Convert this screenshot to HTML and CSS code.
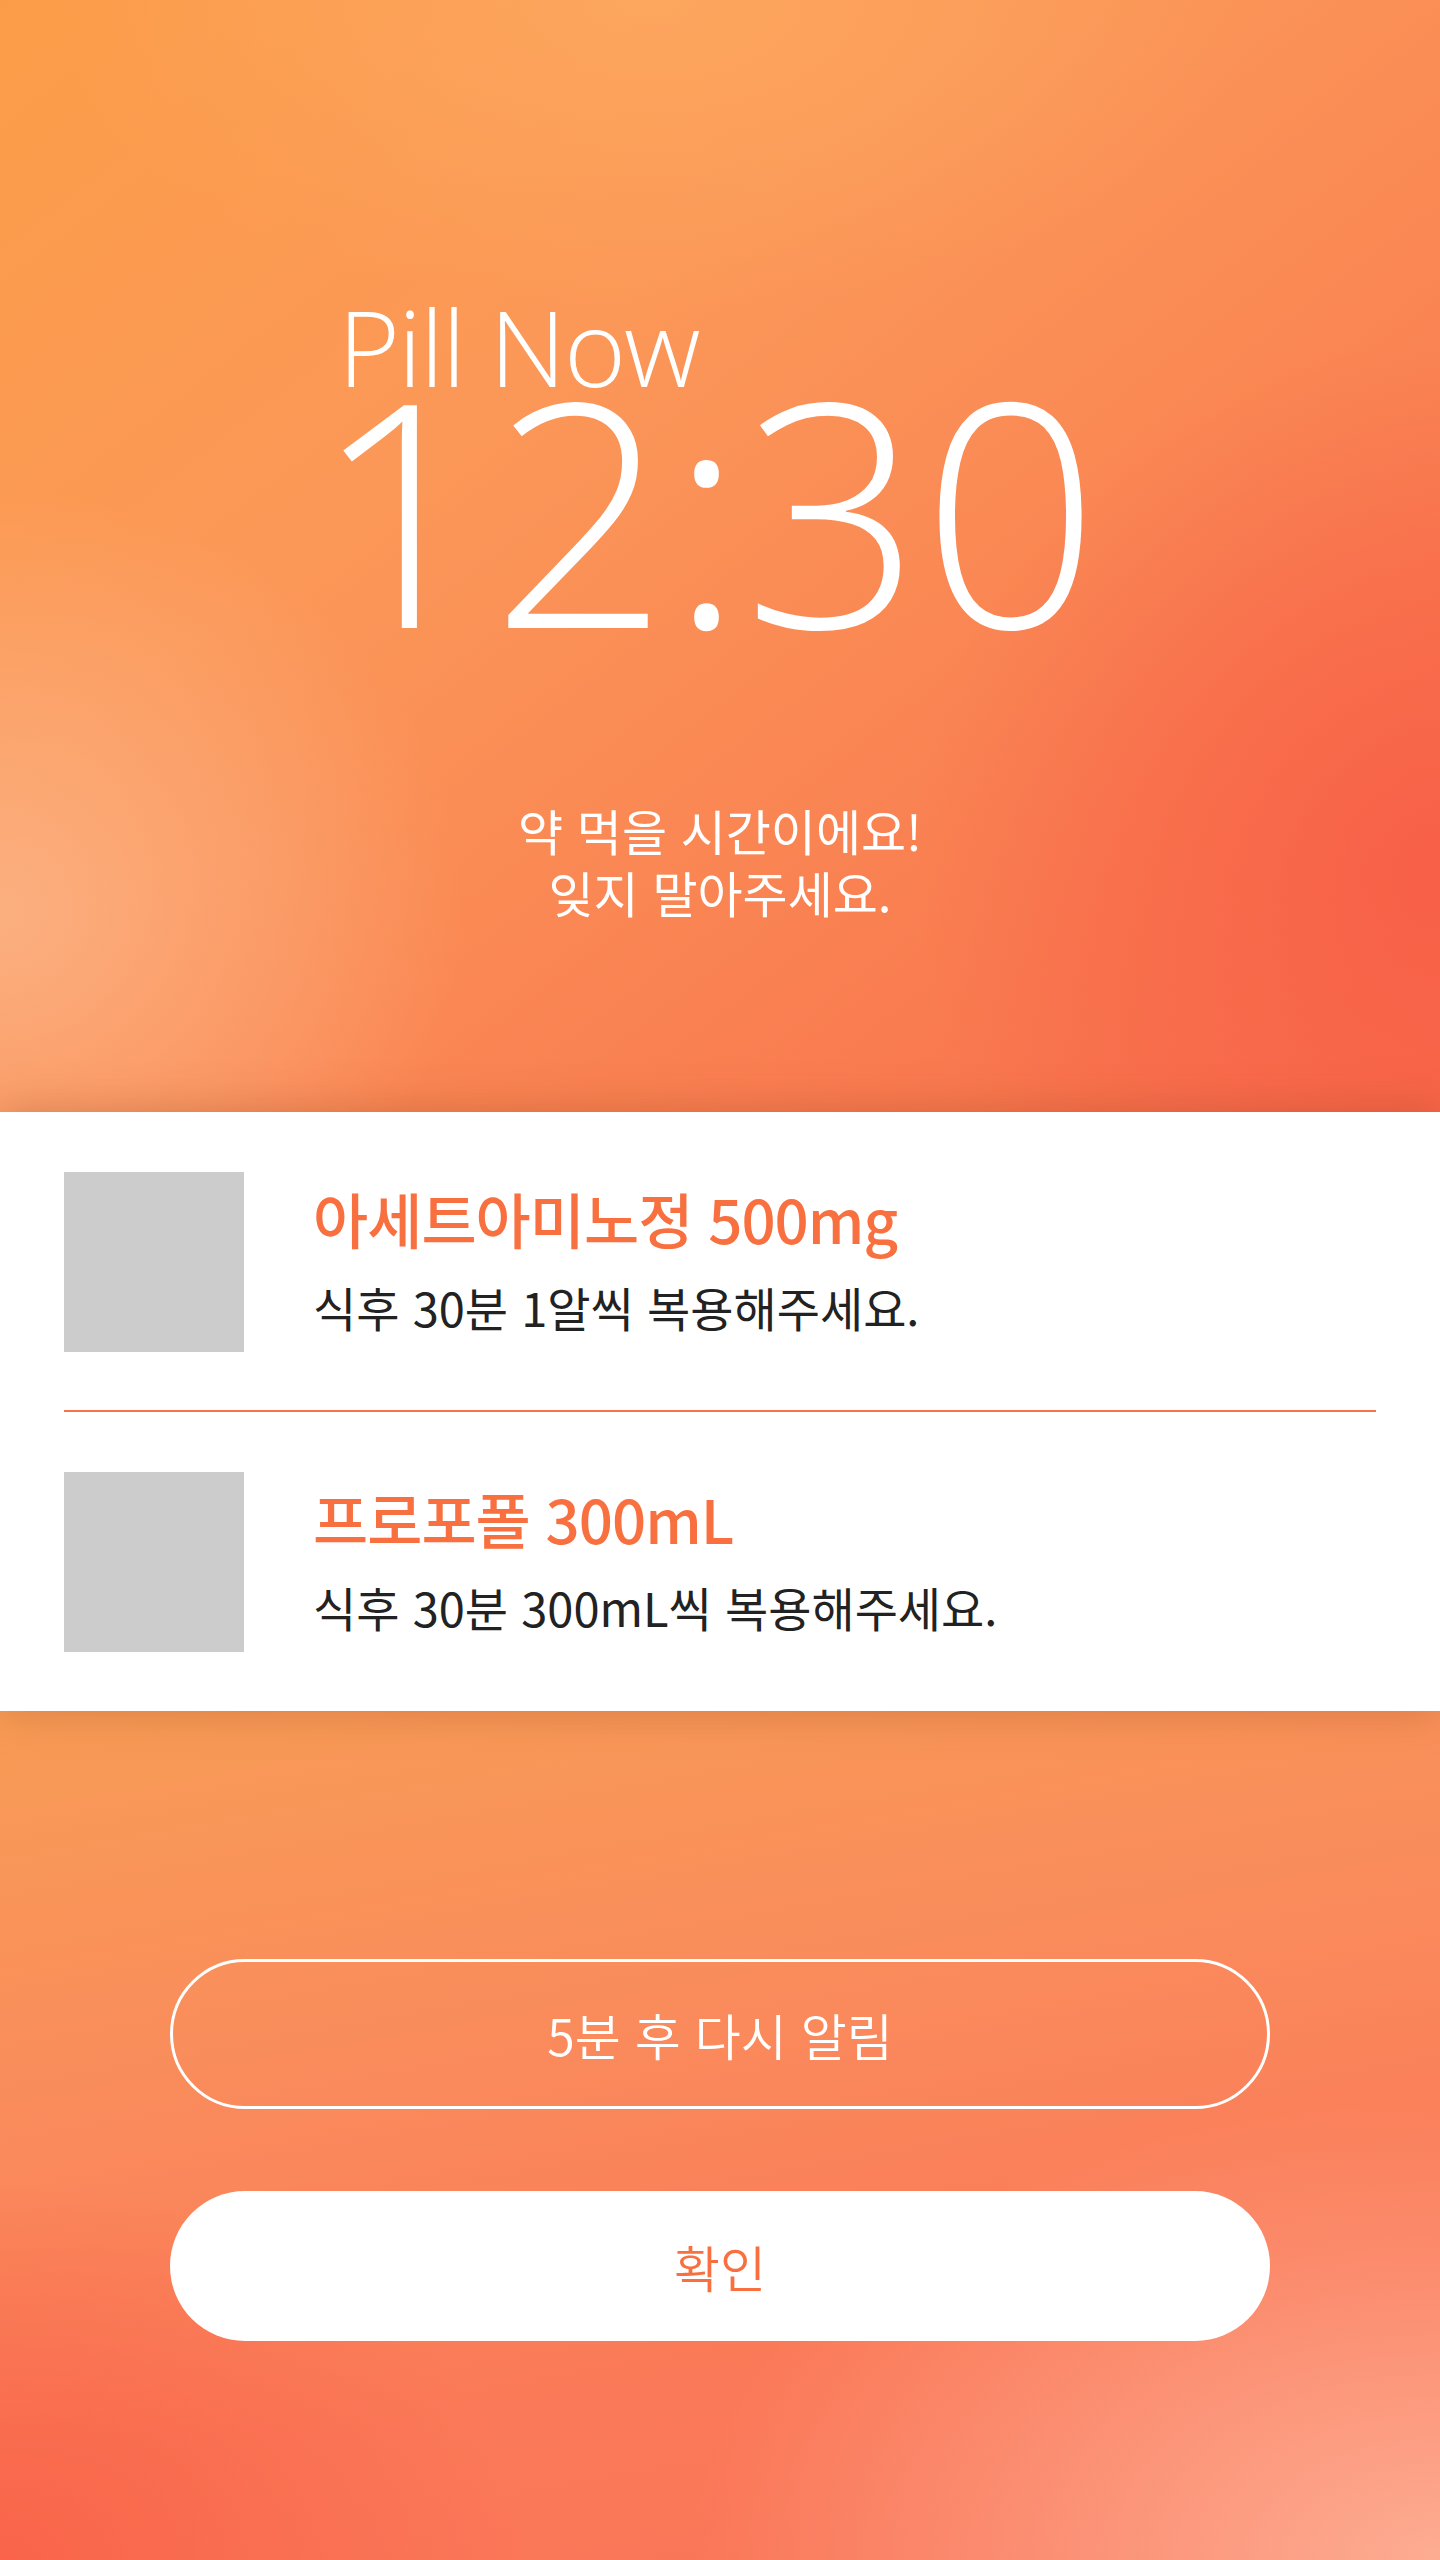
FILE: index.html
```html
<!DOCTYPE html>
<html lang="ko">
<head>
<meta charset="utf-8">
<title>Pill Now</title>
<link rel="stylesheet" href="styles.css">
</head>
<body>
<div class="screen">
  <header class="hero">
    <div class="clock">
      <div class="brand">Pill Now</div>
      <div class="time">12:30</div>
    </div>
    <p class="msg">약 먹을 시간이에요!<br>잊지 말아주세요.</p>
  </header>

  <section class="card">
    <div class="item">
      <div class="thumb"></div>
      <div class="info">
        <div class="name">아세트아미노정 500mg</div>
        <div class="dose">식후 30분 1알씩 복용해주세요.</div>
      </div>
    </div>
    <div class="divider"></div>
    <div class="item">
      <div class="thumb"></div>
      <div class="info">
        <div class="name">프로포폴 300mL</div>
        <div class="dose">식후 30분 300mL씩 복용해주세요.</div>
      </div>
    </div>
  </section>

  <div class="actions">
    <button class="btn btn-outline" type="button">5분 후 다시 알림</button>
    <button class="btn btn-solid" type="button">확인</button>
  </div>
</div>
</body>
</html>
```

FILE: styles.css
```css
* { box-sizing: border-box; }

html, body {
  margin: 0;
  padding: 0;
}

body {
  font-family: "Noto Sans CJK KR", "Noto Sans", sans-serif;
  background: #f9865a;
}

.screen {
  width: 1440px;
  min-height: 2560px;
  display: flex;
  flex-direction: column;
}

.hero {
  height: 1112px;
  padding-top: 300px;
  display: flex;
  flex-direction: column;
  align-items: center;
  color: #fff;
  background:
    radial-gradient(ellipse 620px 560px at 0% 82%, rgba(252, 178, 132, 0.9), rgba(252, 178, 132, 0) 75%),
    radial-gradient(ellipse 800px 420px at 45% 0%, rgba(253, 170, 98, 0.75), rgba(253, 170, 98, 0) 75%),
    radial-gradient(ellipse 700px 700px at 100% 78%, rgba(247, 92, 70, 0.85), rgba(247, 92, 70, 0) 75%),
    linear-gradient(to bottom right, #fb9d48 0%, #fb9858 35%, #fa8854 60%, #f86c4b 100%);
}

.clock {
  width: 754px;
  text-align: left;
  font-family: "Open Sans", "Noto Sans", sans-serif;
  font-weight: 300;
}

.brand {
  font-size: 106px;
  line-height: 93px;
  letter-spacing: -2px;
  margin-left: -5px;
}

.time {
  margin-top: 4px;
  margin-left: -30px;
  font-size: 312px;
  line-height: 220px;
  letter-spacing: 0;
}

.msg {
  margin: 182px 0 0;
  font-size: 49px;
  line-height: 62px;
  font-weight: 400;
  text-align: center;
}

.card {
  position: relative;
  z-index: 1;
  background: #fff;
  padding: 60px 64px 59px;
  box-shadow: 0 0 40px rgba(150, 70, 30, 0.35);
}

.item {
  display: flex;
  align-items: flex-start;
  height: 180px;
}

.thumb {
  width: 180px;
  height: 180px;
  flex: 0 0 180px;
  background: #cccccc;
}

.info {
  margin-left: 69px;
  padding-top: 10px;
}

.name {
  font-size: 60px;
  line-height: 72px;
  font-weight: 500;
  color: #f8703f;
  letter-spacing: -1px;
}

.dose {
  margin-top: 23px;
  font-size: 47px;
  line-height: 60px;
  font-weight: 400;
  color: #222222;
  letter-spacing: 0;
}

.divider {
  height: 2px;
  margin: 58px 0 60px;
  background: #fa7148;
}

.actions {
  flex: 1;
  display: flex;
  flex-direction: column;
  align-items: center;
  padding-top: 248px;
  gap: 82px;
  background:
    radial-gradient(ellipse 1000px 620px at 100% 100%, rgba(253, 172, 146, 1), rgba(253, 172, 146, 0) 75%),
    radial-gradient(ellipse 700px 500px at 0% 100%, rgba(249, 98, 72, 0.9), rgba(249, 98, 72, 0) 75%),
    linear-gradient(170deg, #f89c56 0%, #fa8a5c 40%, #fa7a58 70%, #fa7458 100%);
}

.btn {
  width: 1100px;
  height: 150px;
  border-radius: 75px;
  font-family: "Noto Sans CJK KR", "Noto Sans", sans-serif;
  font-size: 50px;
  font-weight: 350;
  display: flex;
  align-items: center;
  justify-content: center;
  padding: 0;
  cursor: pointer;
}

.btn-outline {
  background: transparent;
  border: 3px solid #fff;
  color: #fff;
}

.btn-solid {
  background: #fff;
  border: none;
  color: #f8703f;
}
```
